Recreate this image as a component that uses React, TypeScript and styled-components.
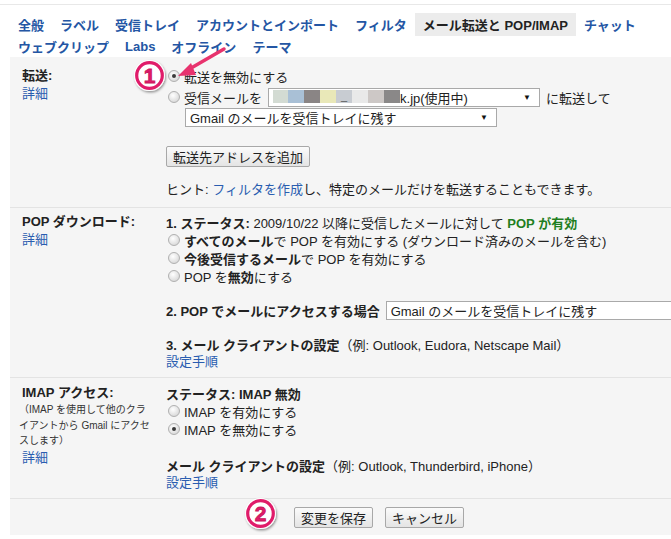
import React from "react";
import styled, { createGlobalStyle, css } from "styled-components";

const GlobalStyle = createGlobalStyle`
  html, body { margin: 0; padding: 0; background: #fff; }
  body {
    font-family: Arial, "Liberation Sans", "Noto Sans CJK JP", sans-serif;
    font-size: 13px;
    color: #222;
  }
`;

const Page = styled.div`
  position: relative;
  width: 671px;
  height: 539px;
  overflow: hidden;
  background: #fff;
`;

const TopRule = styled.div`
  height: 4px;
  border-bottom: 1px solid #e8e8e8;
`;

const Tabs = styled.nav`
  display: flex;
  flex-direction: column;
  padding: 8px 0 0 10px;
`;

const TabRow = styled.div`
  display: flex;
  align-items: center;
  height: 22px;
  white-space: nowrap;
`;

const Tab = styled.span<{ $active?: boolean }>`
  display: inline-flex;
  align-items: center;
  height: 23px;
  padding: 0 8px;
  font-weight: bold;
  color: #2456a4;
  ${(p) =>
    p.$active &&
    css`
      background: #ececec;
      color: #222;
    `}
`;

const Panel = styled.div`
  margin-left: 10px;
  background: #f5f5f5;
  height: 478px;
`;

const Section = styled.section<{ $top: number; $bottom: number }>`
  display: grid;
  grid-template-columns: 144px 1fr;
  padding: ${(p) => p.$top}px 0 ${(p) => p.$bottom}px 12px;
  border-bottom: 1px solid #e3e3e3;
`;

const LabelCol = styled.div`
  display: flex;
  flex-direction: column;
`;

const Label = styled.div`
  font-weight: bold;
  line-height: 18px;
  white-space: nowrap;
`;

const Link = styled.a<{ $lh?: number }>`
  display: block;
  color: #2a5db0;
  text-decoration: none;
  line-height: ${(p) => p.$lh ?? 18}px;
  white-space: nowrap;
`;

const InlineLink = styled.a`
  color: #2a5db0;
  text-decoration: none;
`;

const Note = styled.div`
  font-size: 10px;
  line-height: 15.5px;
  color: #333;
  white-space: nowrap;
  margin-left: -3px;
`;

const Body = styled.div`
  display: flex;
  flex-direction: column;
`;

const Line = styled.div<{ $mt?: number; $h?: number }>`
  display: flex;
  align-items: center;
  height: ${(p) => p.$h ?? 18}px;
  margin-top: ${(p) => p.$mt ?? 0}px;
  white-space: nowrap;
`;

const Radio = styled.span<{ $on?: boolean }>`
  position: relative;
  box-sizing: border-box;
  flex-shrink: 0;
  width: 12px;
  height: 12px;
  margin: 0 4px 0 2px;
  border-radius: 50%;
  border: 1px solid #b0b0b0;
  background: radial-gradient(circle at 40% 35%, #ffffff 0%, #e2e2e2 60%, #cdcdcd 100%);
  ${(p) =>
    p.$on &&
    css`
      &::after {
        content: "";
        position: absolute;
        left: 3px;
        top: 3px;
        width: 4px;
        height: 4px;
        border-radius: 50%;
        background: #3a3a3a;
      }
    `}
`;

const B = styled.b`
  font-weight: bold;
`;

const Green = styled.b`
  font-weight: bold;
  color: #1f7f1f;
`;

const Select = styled.div<{ $w: number; $ml?: number }>`
  box-sizing: border-box;
  display: flex;
  align-items: center;
  flex-shrink: 0;
  width: ${(p) => p.$w}px;
  height: 19px;
  margin-left: ${(p) => p.$ml ?? 0}px;
  padding: 0 8px 0 4px;
  background: #fff;
  border: 1px solid #a9a9a9;
  overflow: hidden;
  white-space: nowrap;
`;

const SelectText = styled.span`
  flex: 1;
  overflow: hidden;
`;

const Caret = styled.span`
  font-size: 8px;
  color: #111;
`;

const Blur = styled.span<{ $c: string }>`
  display: inline-flex;
  align-items: flex-end;
  justify-content: center;
  width: 16px;
  height: 13px;
  background: ${(p) => p.$c};
  color: #555;
  font-size: 11px;
  line-height: 13px;
`;

const BlurRun = styled.span`
  display: inline-flex;
  margin-left: -1px;
`;

const Text = styled.span<{ $ml?: number }>`
  margin-left: ${(p) => p.$ml ?? 0}px;
`;

const Button = styled.button<{ $mr?: number }>`
  box-sizing: border-box;
  height: 21px;
  padding: 0 6px;
  margin-right: ${(p) => p.$mr ?? 0}px;
  font-family: inherit;
  font-size: 13px;
  color: #222;
  background: linear-gradient(#fbfbfb, #e4e4e4);
  border: 1px solid #a8a8a8;
  border-radius: 2px;
  white-space: nowrap;
`;

const ButtonLine = styled.div`
  display: flex;
  margin-top: 19px;
`;

const Footer = styled.div`
  display: flex;
  padding: 8px 0 0 284px;
`;

const Badge = styled.svg<{ $x: number; $y: number }>`
  position: absolute;
  left: ${(p) => p.$x}px;
  top: ${(p) => p.$y}px;
  overflow: visible;
`;

const ArrowSvg = styled.svg`
  position: absolute;
  left: 170px;
  top: 44px;
  overflow: visible;
`;

const blurColors = [
  "#d3dbd3",
  "#a9c0d6",
  "#8a8585",
  "#e9e8b8",
  "#c8ccd2",
  "#e9e9e9",
  "#cdc8c6",
  "#8a8888",
];

function Circled({ n, x, y }: { n: string; x: number; y: number }) {
  return (
    <Badge $x={x} $y={y} width="33" height="33" viewBox="0 0 33 33">
      <defs>
        <filter id={`sh${n}`} x="-30%" y="-30%" width="160%" height="160%">
          <feDropShadow dx="1" dy="1.5" stdDeviation="1.3" floodColor="#000" floodOpacity="0.4" />
        </filter>
      </defs>
      <circle cx="16.5" cy="16.5" r="15.5" fill="#fff" filter={`url(#sh${n})`} />
      <circle cx="16.5" cy="16.5" r="12.8" fill="#fff" stroke="#e01c6a" strokeWidth="3.2" />
      <text
        x="16.5"
        y="24"
        textAnchor="middle"
        fontFamily="Arial, 'Liberation Sans', sans-serif"
        fontWeight="bold"
        fontSize="21"
        fill="#e01c6a"
        stroke="#c8155c"
        strokeWidth="0.8"
      >
        {n}
      </text>
    </Badge>
  );
}

export default function App() {
  return (
    <>
      <GlobalStyle />
      <Page>
        <TopRule />
        <Tabs>
          <TabRow>
            <Tab>全般</Tab>
            <Tab>ラベル</Tab>
            <Tab>受信トレイ</Tab>
            <Tab>アカウントとインポート</Tab>
            <Tab>フィルタ</Tab>
            <Tab $active>メール転送と POP/IMAP</Tab>
            <Tab>チャット</Tab>
          </TabRow>
          <TabRow>
            <Tab>ウェブクリップ</Tab>
            <Tab>Labs</Tab>
            <Tab>オフライン</Tab>
            <Tab>テーマ</Tab>
          </TabRow>
        </Tabs>

        <Panel>
          <Section $top={10} $bottom={10}>
            <LabelCol>
              <Label>転送:</Label>
              <Link>詳細</Link>
            </LabelCol>
            <Body>
              <Line>
                <Radio $on />
                転送を無効にする
              </Line>
              <Line $mt={2} $h={20}>
                <Radio />
                受信メールを
                <Select $w={272} $ml={6}>
                  <SelectText>
                    <BlurRun>
                      {blurColors.map((c, i) => (
                        <Blur key={i} $c={c}>
                          {i === 4 ? "_" : ""}
                        </Blur>
                      ))}
                    </BlurRun>
                    k.jp(使用中)
                  </SelectText>
                  <Caret>▼</Caret>
                </Select>
                <Text $ml={6}>に転送して</Text>
              </Line>
              <Line $mt={1} $h={19}>
                <Select $w={312} $ml={19}>
                  <SelectText>Gmail のメールを受信トレイに残す</SelectText>
                  <Caret>▼</Caret>
                </Select>
              </Line>
              <ButtonLine>
                <Button>転送先アドレスを追加</Button>
              </ButtonLine>
              <Line $mt={12}>
                ヒント:&nbsp;<InlineLink>フィルタを作成</InlineLink>し、特定のメールだけを転送することもできます。
              </Line>
            </Body>
          </Section>

          <Section $top={5} $bottom={7}>
            <LabelCol>
              <Label>POP ダウンロード:</Label>
              <Link>詳細</Link>
            </LabelCol>
            <Body>
              <Line>
                <B>1. ステータス:</B>&nbsp;2009/10/22 以降に受信したメールに対して&nbsp;<Green>POP が有効</Green>
              </Line>
              <Line>
                <Radio />
                <B>すべてのメール</B>で POP を有効にする (ダウンロード済みのメールを含む)
              </Line>
              <Line>
                <Radio />
                <B>今後受信するメール</B>で POP を有効にする
              </Line>
              <Line>
                <Radio />
                POP を<B>無効</B>にする
              </Line>
              <Line $mt={15} $h={20}>
                <B>2. POP でメールにアクセスする場合</B>
                <Select $w={300} $ml={6}>
                  <SelectText>Gmail のメールを受信トレイに残す</SelectText>
                </Select>
              </Line>
              <Line $mt={15}>
                <B>3. メール クライアントの設定</B>（例: Outlook, Eudora, Netscape Mail）
              </Line>
              <Link $lh={17}>設定手順</Link>
            </Body>
          </Section>

          <Section $top={6} $bottom={7}>
            <LabelCol>
              <Label>IMAP アクセス:</Label>
              <Note>（IMAP を使用して他のクラ</Note>
              <Note>イアントから Gmail にアクセ</Note>
              <Note>スします）</Note>
              <Link>詳細</Link>
            </LabelCol>
            <Body>
              <Line>
                <B>ステータス: IMAP 無効</B>
              </Line>
              <Line>
                <Radio />
                IMAP を有効にする
              </Line>
              <Line>
                <Radio $on />
                IMAP を無効にする
              </Line>
              <Line $mt={18}>
                <B>メール クライアントの設定</B>（例: Outlook, Thunderbird, iPhone）
              </Line>
              <Link $lh={17}>設定手順</Link>
            </Body>
          </Section>

          <Footer>
            <Button $mr={12}>変更を保存</Button>
            <Button>キャンセル</Button>
          </Footer>
        </Panel>

        <ArrowSvg width="60" height="40" viewBox="0 0 60 40">
          <line x1="54" y1="5" x2="16" y2="27" stroke="#e8336e" strokeWidth="3.5" strokeLinecap="round" />
          <polygon points="8,32 21,19 26,31" fill="#e8336e" />
        </ArrowSvg>
        <Circled n="1" x={133} y={59} />
        <Circled n="2" x={244} y={497} />
      </Page>
    </>
  );
}
